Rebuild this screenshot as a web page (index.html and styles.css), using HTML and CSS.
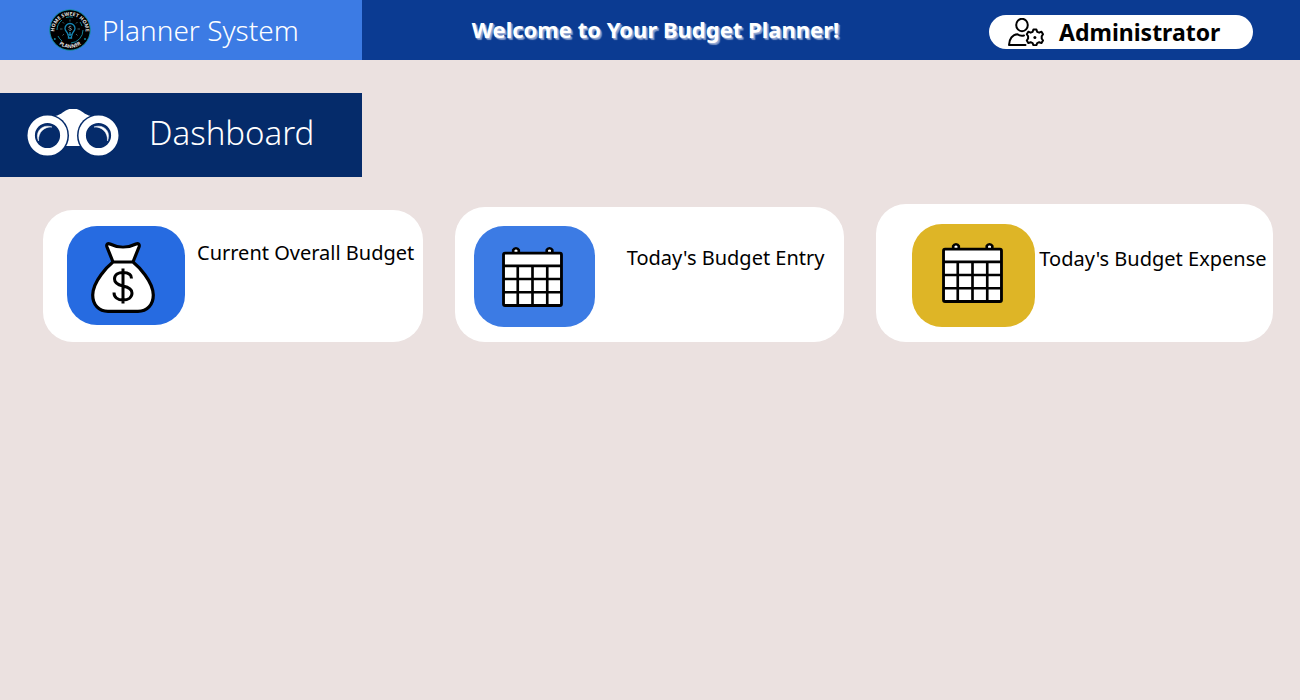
FILE: index.html
```html
<!DOCTYPE html>
<html lang="en">
<head>
<meta charset="utf-8">
<title>Planner System</title>
<link rel="stylesheet" href="styles.css">
</head>
<body>
<svg class="defs" aria-hidden="true">
  <symbol id="calendar" viewBox="0 0 60 60">
    <path d="M11 6V4a3 3 0 0 1 5.500 0v2M44 6V4a3 3 0 0 1 5.500 0v2" fill="#fff" stroke="#000" stroke-width="2.600"/>
    <rect x="1.500" y="7" width="57" height="51.500" rx="1.500" fill="#fff" stroke="#000" stroke-width="2.800"/>
    <path d="M1 19.500h58M1 32.500h58M1 45.500h58M15.500 19v39M30 19v39M44.500 19v39" fill="none" stroke="#000" stroke-width="2.600"/>
  </symbol>
</svg>
<header class="topbar">
  <div class="brand">
    <svg class="logo" viewBox="0 0 42 42" aria-hidden="true">
      <defs>
        <path id="arc-top" d="M6 27A15.700 15.700 0 1 1 36 27"/>
        <path id="arc-bottom" d="M5 30A18.800 18.800 0 0 0 37 30"/>
      </defs>
      <circle cx="21" cy="21" r="20.300" fill="#000" stroke="#178fa6" stroke-width="1"/>
      <text class="logo-text"><textPath href="#arc-top" startOffset="50%" text-anchor="middle">HOME SWEET HOME</textPath></text>
      <text class="logo-text"><textPath href="#arc-bottom" startOffset="50%" text-anchor="middle">PLANNER</textPath></text>
      <path d="M8 21a13 13 0 0 1 5-10M17 8.500a13 13 0 0 1 7-.3M34 21a13 13 0 0 1-12 13M31 13a13 13 0 0 1 2 4M9 27a13 13 0 0 0 4 5" fill="none" stroke="#128295" stroke-width="1"/>
      <path d="M19 26c0-3-3-3.500-3-6.500a5 5 0 0 1 10 0c0 3-3 3.500-3 6.500zM19.500 27v2h3v-2M21 26v-3" fill="none" stroke="#1687b5" stroke-width="1.300"/>
      <path d="M21 12.500v-2M15 14.500l-1.500-1.500M27 14.500l1.500-1.500M13.500 20h-2.500M28.500 20H31M15 25l-1.500 1.500M27 25l1.500 1.500" stroke="#4a7886" stroke-width=".8"/>
      <path d="M22.300 17.800c-.5-.8-2.500-.7-2.500.5s2.600.8 2.600 2-2.200 1.400-2.800.3" fill="none" stroke="#b5c7d0" stroke-width=".7"/>
      <circle cx="5.800" cy="30" r="1" fill="#15879b"/><circle cx="36" cy="30" r="1" fill="#15879b"/>
    </svg>
    <span class="brand-name">Planner System</span>
  </div>
  <h1 class="welcome">Welcome to Your Budget Planner!</h1>
  <button class="admin" type="button">
    <svg class="admin-icon" viewBox="0 0 36 28" aria-hidden="true">
      <g fill="none" stroke="#000" stroke-width="2" stroke-linejoin="round">
        <ellipse cx="14" cy="7" rx="5.800" ry="6.200"/>
        <path d="M17.500 27H1c.2-6 3.500-10.500 8.500-10.800 2 1.600 4 1.800 6.500 1.300" stroke-linecap="round"/>
        <path d="M25.400 11.500h3l.8 2.300 2 .9 2.300-1 1.500 2.600-1.300 2v2.200l1.300 2-1.500 2.600-2.300-.9-2 .9-.8 2.100h-3l-.8-2.100-2-.9-2.300.9-1.500-2.600 1.300-2v-2.200l-1.300-2 1.500-2.600 2.300 1 2-.9z"/>
      </g>
      <circle cx="26.900" cy="19.400" r="1.500"/>
    </svg>
    <span>Administrator</span>
  </button>
</header>
<main>
  <div class="banner">
    <svg class="binoculars" viewBox="0 1 92 48" aria-hidden="true">
      <path d="M28 8C36 6.500 38 .5 46 .5S56 6.500 64 8L54 38H38z" fill="#fff"/>
      <g class="lens">
        <circle cx="20.500" cy="27.500" r="21.500"/>
        <circle cx="71.500" cy="27.500" r="21.500"/>
      </g>
      <g fill="none" stroke="#fff">
        <circle cx="20.500" cy="27.500" r="16.300" stroke-width="7.400"/>
        <circle cx="71.500" cy="27.500" r="16.300" stroke-width="7.400"/>
      </g>
      <path d="M11.500 33C7.500 24 15 15.500 25 19 17.500 18.500 11 24 11.500 33zM80.500 33C84.500 24 77 15.500 67 19c7.500-.5 14 5 13.500 14z" fill="#fff" stroke="#fff" stroke-width=".5"/>
    </svg>
    <h2 class="banner-title">Dashboard</h2>
  </div>
  <section class="cards">
    <article class="card card-overall">
      <div class="tile">
        <svg class="bag" viewBox="0 0 64 72" aria-hidden="true">
          <path d="M22 21L16 6c-1-3 1-4 3-3 8 4 18 4 26 0 2-1 4 0 3 3l-6 15" fill="#fff" stroke="#000" stroke-width="3.200"/>
          <path d="M22 21h20c5 4 20 19 20.300 33C62.300 64 56 70.300 47 70.300H17C8 70.300 1.700 64 1.700 54 2 40 17 25 22 21z" fill="#fff" stroke="#000" stroke-width="3.200"/>
          <path d="M32 27.500v35M40.500 37.500c0-4.500-4-6-8.500-6s-8.500 2-8.500 6.500 4 6 8.500 7c5 1 9 2.500 9 7s-4 7-9 7-9-2.500-9-7.500" fill="none" stroke="#000" stroke-width="3"/>
        </svg>
      </div>
      <h3 class="card-title">Current Overall Budget</h3>
    </article>
    <article class="card card-entry">
      <div class="tile">
        <svg class="calendar" aria-hidden="true"><use href="#calendar"/></svg>
      </div>
      <h3 class="card-title">Today's Budget Entry</h3>
    </article>
    <article class="card card-expense">
      <div class="tile">
        <svg class="calendar" aria-hidden="true"><use href="#calendar"/></svg>
      </div>
      <h3 class="card-title">Today's Budget Expense</h3>
    </article>
  </section>
</main>
</body>
</html>
```
FILE: styles.css
```css
* { box-sizing: border-box; }
body {
  margin: 0;
  min-height: 100vh;
  background: #ebe1e0;
  color: #000;
  font-family: "Noto Sans", "Open Sans", sans-serif;
}
h1, h2, h3 { margin: 0; }
.defs { display: none; }
.topbar {
  display: flex;
  align-items: center;
  height: 60px;
  padding-right: 47px;
  background: #0b3b92;
}
.brand {
  display: flex;
  align-items: center;
  gap: 11px;
  width: 362px;
  height: 100%;
  padding-left: 49px;
  background: #3c7be4;
  color: #fff;
}
.logo { width: 42px; height: 42px; }
.logo-text { fill: #e4e4e4; font-size: 5px; font-weight: 700; }
.brand-name { font-size: 28px; line-height: 40px; font-weight: 300; }
.welcome {
  flex: 1;
  padding: 0 40px 2px 0;
  color: #fff;
  font-size: 22px;
  line-height: 32px;
  font-weight: 700;
  text-align: center;
  text-shadow: 1px 1px 1px #9fb2d8, 2px 2px 1px #7890c2;
}
.admin {
  display: flex;
  align-items: center;
  gap: 15px;
  width: 264px;
  height: 34px;
  margin-top: 4px;
  padding: 0 19px;
  border: 0;
  border-radius: 17px;
  background: #fff;
  color: #000;
  font: inherit;
  font-size: 23px;
  line-height: 32px;
  font-weight: 700;
}
.admin-icon { width: 36px; height: 28px; }
.banner {
  display: flex;
  align-items: center;
  gap: 30px;
  width: 362px;
  height: 84px;
  margin-top: 33px;
  padding: 0 0 4px 27px;
  background: #052b6a;
  color: #fff;
}
.binoculars { width: 92px; height: 48px; }
.lens { fill: #052b6a; }
.banner-title { font-size: 33px; line-height: 44px; font-weight: 300; }
.cards {
  display: grid;
  grid-template-columns: 380fr 390fr 397fr;
  align-items: end;
  gap: 32px;
  margin-top: 27px;
  padding: 0 27px 0 43px;
}
.card {
  display: flex;
  border-radius: 30px;
  background: #fff;
}
.tile {
  display: flex;
  flex: none;
  align-items: center;
  justify-content: center;
  border-radius: 30px;
}
.card-title {
  font-size: 20px;
  line-height: 28px;
  font-weight: 400;
  white-space: nowrap;
}
.bag { width: 64px; height: 72px; }
.calendar { width: 61px; height: 61px; }
.card-overall { gap: 12px; padding: 16px 0 17px 24px; }
.card-overall .tile { width: 118px; height: 99px; padding: 2px 6px 0 0; background: #266be1; }
.card-overall .card-title { margin-top: 13px; }
.card-entry { gap: 32px; padding: 19px 0 15px 19px; }
.card-entry .tile { width: 121px; height: 101px; padding-right: 3px; background: #3c7be4; }
.card-entry .card-title { margin-top: 18px; }
.card-expense { gap: 4px; padding: 20px 0 15px 36px; }
.card-expense .tile { width: 123px; height: 103px; padding: 0 3px 6px 0; background: #deb526; }
.card-expense .card-title { margin-top: 21px; }
```
